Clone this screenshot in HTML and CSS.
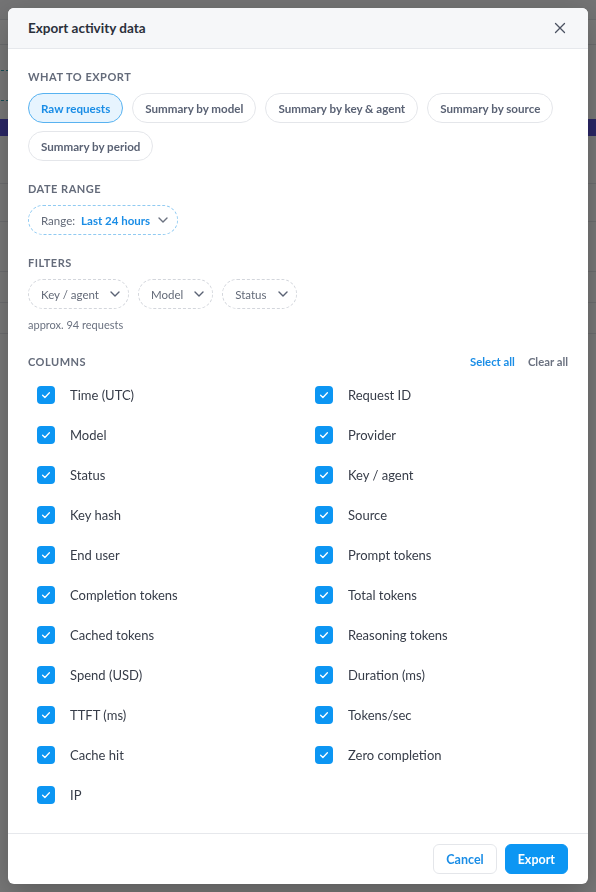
FILE: index.html
```html
<!DOCTYPE html>
<html lang="en">
<head>
<meta charset="utf-8">
<title>Activity</title>
<link rel="stylesheet" href="styles.css">
</head>
<body>
  <div class="app">
    <div class="app-top"></div>
    <div class="app-nav"></div>
    <div class="app-toolbar">
      <div class="tool-row"><span class="tool-pill"></span></div>
      <div class="tool-row"><span class="tool-pill"></span></div>
    </div>
    <div class="app-banner"></div>
    <div class="app-table">
      <div class="app-row tall"></div>
      <div class="app-row"></div>
      <div class="app-row mid"></div>
      <div class="app-row short"></div>
      <div class="app-row short"></div>
    </div>
  </div>

  <div class="backdrop">
    <div class="modal" role="dialog" aria-labelledby="export-title">
      <header class="modal-head">
        <h2 id="export-title">Export activity data</h2>
        <button class="close" aria-label="Close">
          <svg width="12" height="12" viewBox="0 0 12 12"><path d="M1.5 1.5 L10.5 10.5 M10.5 1.5 L1.5 10.5" stroke="#4b5261" stroke-width="1.3" stroke-linecap="round" fill="none"/></svg>
        </button>
      </header>

      <div class="modal-body">
        <section class="group">
          <div class="label">What to export</div>
          <div class="chips">
            <button class="chip active">Raw requests</button>
            <button class="chip">Summary by model</button>
            <button class="chip">Summary by key &amp; agent</button>
            <button class="chip">Summary by source</button>
            <button class="chip">Summary by period</button>
          </div>
        </section>

        <section class="group">
          <div class="label">Date range</div>
          <div class="chips">
            <button class="select range">
              <span class="select-key">Range:</span>
              <span class="select-val">Last 24 hours</span>
              <svg class="chev" width="10" height="6" viewBox="0 0 10 6"><path d="M1 1 L5 5 L9 1" stroke="currentColor" stroke-width="1.4" fill="none" stroke-linecap="round" stroke-linejoin="round"/></svg>
            </button>
          </div>
        </section>

        <section class="group">
          <div class="label">Filters</div>
          <div class="chips">
            <button class="select filter">Key / agent
              <svg class="chev" width="10" height="6" viewBox="0 0 10 6"><path d="M1 1 L5 5 L9 1" stroke="currentColor" stroke-width="1.4" fill="none" stroke-linecap="round" stroke-linejoin="round"/></svg>
            </button>
            <button class="select filter">Model
              <svg class="chev" width="10" height="6" viewBox="0 0 10 6"><path d="M1 1 L5 5 L9 1" stroke="currentColor" stroke-width="1.4" fill="none" stroke-linecap="round" stroke-linejoin="round"/></svg>
            </button>
            <button class="select filter">Status
              <svg class="chev" width="10" height="6" viewBox="0 0 10 6"><path d="M1 1 L5 5 L9 1" stroke="currentColor" stroke-width="1.4" fill="none" stroke-linecap="round" stroke-linejoin="round"/></svg>
            </button>
          </div>
          <p class="hint">approx. 94 requests</p>
        </section>

        <section class="group columns">
          <div class="columns-head">
            <div class="label">Columns</div>
            <div class="links">
              <button class="link primary">Select all</button>
              <button class="link">Clear all</button>
            </div>
          </div>
          <div class="col-grid">
            <label class="col"><span class="box"><svg width="18" height="18" viewBox="0 0 18 18"><path d="M5.6 9.3 L7.9 11.5 L12.4 6.8" stroke="#fff" stroke-width="1.3" fill="none" stroke-linecap="round" stroke-linejoin="round"/></svg></span>Time (UTC)</label>
            <label class="col"><span class="box"><svg width="18" height="18" viewBox="0 0 18 18"><path d="M5.6 9.3 L7.9 11.5 L12.4 6.8" stroke="#fff" stroke-width="1.3" fill="none" stroke-linecap="round" stroke-linejoin="round"/></svg></span>Request ID</label>
            <label class="col"><span class="box"><svg width="18" height="18" viewBox="0 0 18 18"><path d="M5.6 9.3 L7.9 11.5 L12.4 6.8" stroke="#fff" stroke-width="1.3" fill="none" stroke-linecap="round" stroke-linejoin="round"/></svg></span>Model</label>
            <label class="col"><span class="box"><svg width="18" height="18" viewBox="0 0 18 18"><path d="M5.6 9.3 L7.9 11.5 L12.4 6.8" stroke="#fff" stroke-width="1.3" fill="none" stroke-linecap="round" stroke-linejoin="round"/></svg></span>Provider</label>
            <label class="col"><span class="box"><svg width="18" height="18" viewBox="0 0 18 18"><path d="M5.6 9.3 L7.9 11.5 L12.4 6.8" stroke="#fff" stroke-width="1.3" fill="none" stroke-linecap="round" stroke-linejoin="round"/></svg></span>Status</label>
            <label class="col"><span class="box"><svg width="18" height="18" viewBox="0 0 18 18"><path d="M5.6 9.3 L7.9 11.5 L12.4 6.8" stroke="#fff" stroke-width="1.3" fill="none" stroke-linecap="round" stroke-linejoin="round"/></svg></span>Key / agent</label>
            <label class="col"><span class="box"><svg width="18" height="18" viewBox="0 0 18 18"><path d="M5.6 9.3 L7.9 11.5 L12.4 6.8" stroke="#fff" stroke-width="1.3" fill="none" stroke-linecap="round" stroke-linejoin="round"/></svg></span>Key hash</label>
            <label class="col"><span class="box"><svg width="18" height="18" viewBox="0 0 18 18"><path d="M5.6 9.3 L7.9 11.5 L12.4 6.8" stroke="#fff" stroke-width="1.3" fill="none" stroke-linecap="round" stroke-linejoin="round"/></svg></span>Source</label>
            <label class="col"><span class="box"><svg width="18" height="18" viewBox="0 0 18 18"><path d="M5.6 9.3 L7.9 11.5 L12.4 6.8" stroke="#fff" stroke-width="1.3" fill="none" stroke-linecap="round" stroke-linejoin="round"/></svg></span>End user</label>
            <label class="col"><span class="box"><svg width="18" height="18" viewBox="0 0 18 18"><path d="M5.6 9.3 L7.9 11.5 L12.4 6.8" stroke="#fff" stroke-width="1.3" fill="none" stroke-linecap="round" stroke-linejoin="round"/></svg></span>Prompt tokens</label>
            <label class="col"><span class="box"><svg width="18" height="18" viewBox="0 0 18 18"><path d="M5.6 9.3 L7.9 11.5 L12.4 6.8" stroke="#fff" stroke-width="1.3" fill="none" stroke-linecap="round" stroke-linejoin="round"/></svg></span>Completion tokens</label>
            <label class="col"><span class="box"><svg width="18" height="18" viewBox="0 0 18 18"><path d="M5.6 9.3 L7.9 11.5 L12.4 6.8" stroke="#fff" stroke-width="1.3" fill="none" stroke-linecap="round" stroke-linejoin="round"/></svg></span>Total tokens</label>
            <label class="col"><span class="box"><svg width="18" height="18" viewBox="0 0 18 18"><path d="M5.6 9.3 L7.9 11.5 L12.4 6.8" stroke="#fff" stroke-width="1.3" fill="none" stroke-linecap="round" stroke-linejoin="round"/></svg></span>Cached tokens</label>
            <label class="col"><span class="box"><svg width="18" height="18" viewBox="0 0 18 18"><path d="M5.6 9.3 L7.9 11.5 L12.4 6.8" stroke="#fff" stroke-width="1.3" fill="none" stroke-linecap="round" stroke-linejoin="round"/></svg></span>Reasoning tokens</label>
            <label class="col"><span class="box"><svg width="18" height="18" viewBox="0 0 18 18"><path d="M5.6 9.3 L7.9 11.5 L12.4 6.8" stroke="#fff" stroke-width="1.3" fill="none" stroke-linecap="round" stroke-linejoin="round"/></svg></span>Spend (USD)</label>
            <label class="col"><span class="box"><svg width="18" height="18" viewBox="0 0 18 18"><path d="M5.6 9.3 L7.9 11.5 L12.4 6.8" stroke="#fff" stroke-width="1.3" fill="none" stroke-linecap="round" stroke-linejoin="round"/></svg></span>Duration (ms)</label>
            <label class="col"><span class="box"><svg width="18" height="18" viewBox="0 0 18 18"><path d="M5.6 9.3 L7.9 11.5 L12.4 6.8" stroke="#fff" stroke-width="1.3" fill="none" stroke-linecap="round" stroke-linejoin="round"/></svg></span>TTFT (ms)</label>
            <label class="col"><span class="box"><svg width="18" height="18" viewBox="0 0 18 18"><path d="M5.6 9.3 L7.9 11.5 L12.4 6.8" stroke="#fff" stroke-width="1.3" fill="none" stroke-linecap="round" stroke-linejoin="round"/></svg></span>Tokens/sec</label>
            <label class="col"><span class="box"><svg width="18" height="18" viewBox="0 0 18 18"><path d="M5.6 9.3 L7.9 11.5 L12.4 6.8" stroke="#fff" stroke-width="1.3" fill="none" stroke-linecap="round" stroke-linejoin="round"/></svg></span>Cache hit</label>
            <label class="col"><span class="box"><svg width="18" height="18" viewBox="0 0 18 18"><path d="M5.6 9.3 L7.9 11.5 L12.4 6.8" stroke="#fff" stroke-width="1.3" fill="none" stroke-linecap="round" stroke-linejoin="round"/></svg></span>Zero completion</label>
            <label class="col"><span class="box"><svg width="18" height="18" viewBox="0 0 18 18"><path d="M5.6 9.3 L7.9 11.5 L12.4 6.8" stroke="#fff" stroke-width="1.3" fill="none" stroke-linecap="round" stroke-linejoin="round"/></svg></span>IP</label>
          </div>
        </section>
      </div>

      <footer class="modal-foot">
        <button class="btn ghost">Cancel</button>
        <button class="btn solid">Export</button>
      </footer>
    </div>
  </div>
</body>
</html>
```

FILE: styles.css
```css
* { box-sizing: border-box; }

html, body {
  margin: 0;
  height: 100%;
}

body {
  font-family: Lato, "Noto Sans", sans-serif;
  background: #fff;
  color: #2b303b;
  overflow: hidden;
}

button {
  font-family: inherit;
  cursor: pointer;
}

/* ---------- page underneath the dialog ---------- */
.app-top {
  height: 20px;
  background: #f4f5f7;
  border-bottom: 1px solid #e3e5e9;
}
.app-nav {
  height: 25px;
  border-bottom: 1px solid #e3e5e9;
}
.app-toolbar {
  display: flex;
  flex-direction: column;
  gap: 12px;
  padding: 8px 0 0;
  height: 74px;
}
.tool-row {
  display: flex;
}
.tool-pill {
  display: block;
  width: 90px;
  height: 18px;
  margin-left: -40px;
  border-bottom: 1px dashed #2ea5b8;
}
.app-banner {
  height: 17px;
  background: #5b53d9;
}
.app-table {
  padding-top: 9px;
}
.app-row {
  height: 38px;
  border-bottom: 1px solid #e6e8ec;
}
.app-row.tall { height: 39px; }
.app-row.mid { height: 50px; }
.app-row.short { height: 31px; }

/* ---------- dialog ---------- */
.backdrop {
  position: fixed;
  inset: 0;
  padding: 8px;
  background: rgba(0, 0, 0, 0.53);
  display: flex;
}

.modal {
  flex: 1;
  display: flex;
  flex-direction: column;
  background: #fff;
  border-radius: 6px;
  overflow: hidden;
  box-shadow: 0 10px 30px rgba(0, 0, 0, 0.25);
}

.modal-head {
  height: 41px;
  flex: none;
  display: flex;
  align-items: center;
  justify-content: space-between;
  padding: 0 20px;
  background: #f6f7f9;
  border-bottom: 1px solid #e6e8ec;
}
.modal-head h2 {
  margin: 0;
  font-size: 13.5px;
  font-weight: 700;
  color: #2b303b;
}
.close {
  border: 0;
  background: none;
  padding: 0;
  width: 12px;
  height: 12px;
  margin-right: 2px;
  display: flex;
  align-items: center;
  justify-content: center;
}

.modal-body {
  flex: 1;
  overflow: hidden;
  padding: 21px 20px 16px;
  display: flex;
  flex-direction: column;
  gap: 21px;
}

.label {
  font-size: 11px;
  line-height: 14px;
  font-weight: 700;
  letter-spacing: 0.5px;
  text-transform: uppercase;
  color: #646b7a;
  margin-bottom: 9px;
}

.chips {
  display: flex;
  flex-wrap: wrap;
  gap: 8px 9px;
}

.chip {
  height: 30px;
  padding: 0 12px;
  border: 1px solid #e4e6ea;
  border-radius: 15px;
  background: #fff;
  font-size: 11.6px;
  font-weight: 700;
  color: #5a6274;
}
.chip.active {
  background: #e7f4fe;
  border-color: #58b2f0;
  color: #1a8de6;
}

.select {
  height: 30px;
  display: inline-flex;
  align-items: center;
  border-radius: 15px;
  background: #fff;
  font-size: 11.5px;
}
.select.range {
  border: 1px dashed #8fcaf2;
  color: #636a78;
  padding: 0 9px 0 12px;
}
.select-key {
  font-weight: 400;
  margin-right: 6px;
}
.select-val {
  font-weight: 700;
  color: #1a8de6;
}
.select.range .chev {
  color: #6b7280;
  margin-left: 8px;
}
.select.filter {
  border: 1px dashed #d3d6dc;
  color: #636a78;
  padding: 0 8px 0 12px;
}
.select.filter .chev {
  margin-left: 11px;
  color: #5a6274;
}

.hint {
  margin: 9px 0 0;
  font-size: 11px;
  line-height: 14px;
  color: #6b7280;
}

.group.columns {
  margin-top: 2px;
}
.columns-head {
  display: flex;
  justify-content: space-between;
  align-items: flex-start;
}
.columns-head .label {
  margin-bottom: 0;
}
.links {
  display: flex;
  gap: 13px;
}
.link {
  border: 0;
  background: none;
  padding: 0;
  font-size: 11.3px;
  line-height: 14px;
  font-weight: 700;
  color: #6b7280;
}
.link.primary {
  color: #1a8de6;
}

.col-grid {
  display: grid;
  grid-template-columns: 1fr 1fr;
  column-gap: 16px;
  margin-top: 6px;
}
.col {
  height: 40px;
  display: flex;
  align-items: center;
  padding-left: 9px;
  font-size: 13px;
  color: #363c48;
  cursor: pointer;
}
.box {
  width: 18px;
  height: 18px;
  border-radius: 4px;
  background: #0c96f3;
  margin-right: 15px;
  display: flex;
  flex: none;
}

.modal-foot {
  flex: none;
  display: flex;
  justify-content: flex-end;
  gap: 8px;
  padding: 10px 20px;
  border-top: 1px solid #e6e8ec;
}
.btn {
  height: 30px;
  padding: 0 12px;
  border-radius: 6px;
  font-size: 12.5px;
  font-weight: 700;
}
.btn.ghost {
  background: #fff;
  border: 1px solid #e4e6ea;
  color: #1a8de6;
}
.btn.solid {
  background: #0c96f3;
  border: 1px solid #0c96f3;
  color: #fff;
}
```
